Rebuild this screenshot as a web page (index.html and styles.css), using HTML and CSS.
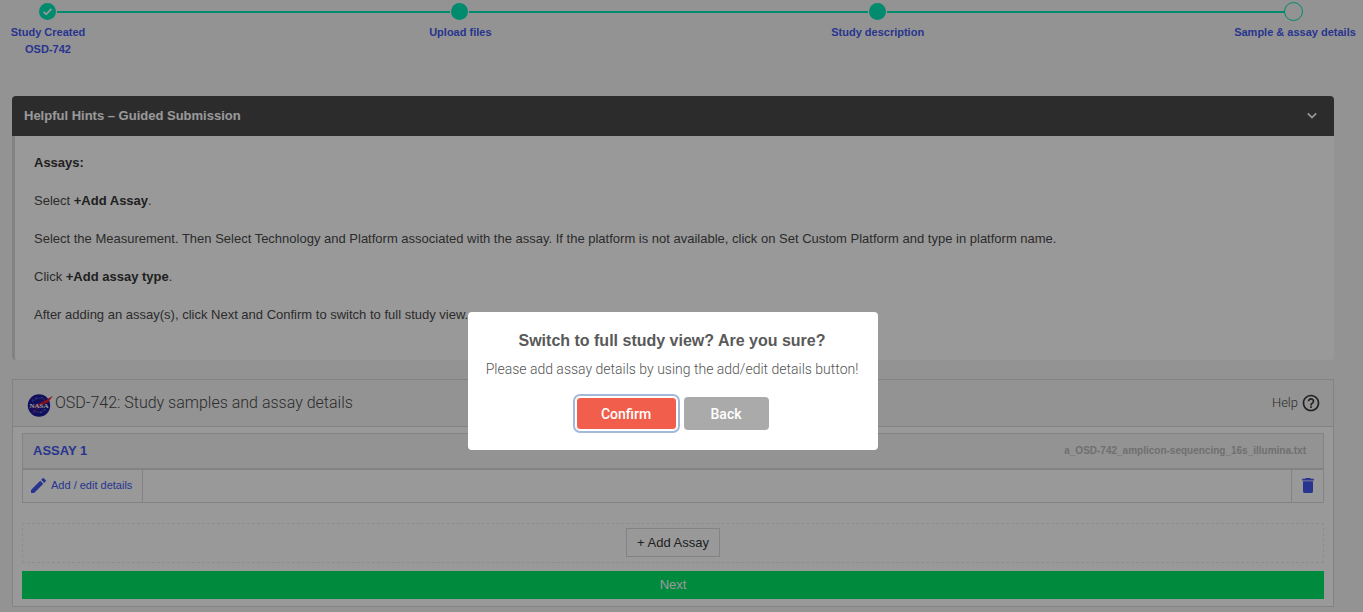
FILE: index.html
```html
<!DOCTYPE html>
<html lang="en">
<head>
<meta charset="utf-8">
<title>OSD-742: Study samples and assay details</title>
<link rel="stylesheet" href="styles.css">
</head>
<body>
<ol class="steps">
  <li class="step">
    <div class="track">
      <span class="marker"><svg viewBox="0 0 17 17" width="17" height="17"><path d="M4.600 8.800l2.600 2.500 5.200-5.400" fill="none" stroke="#fff" stroke-width="1.800"/></svg></span>
      <span class="line"></span>
    </div>
    <p class="step-label">Study Created<br>OSD-742</p>
  </li>
  <li class="step">
    <div class="track"><span class="marker"></span><span class="line"></span></div>
    <p class="step-label">Upload files</p>
  </li>
  <li class="step">
    <div class="track"><span class="marker"></span><span class="line"></span></div>
    <p class="step-label">Study description</p>
  </li>
  <li class="step">
    <div class="track"><span class="marker open"></span></div>
    <p class="step-label">Sample &amp; assay details</p>
  </li>
</ol>

<main class="content">
  <section class="hints">
    <header class="hints-head">
      <h2>Helpful Hints – Guided Submission</h2>
      <button class="icon-button" type="button" aria-label="Collapse hints">
        <svg viewBox="0 0 10 10" width="10" height="10"><path d="M.8 2.300L5 6.500l4.200-4.200" fill="none" stroke="currentColor" stroke-width="1.700"/></svg>
      </button>
    </header>
    <div class="hints-body">
      <p><strong>Assays:</strong></p>
      <p>Select <strong>+Add Assay</strong>.</p>
      <p>Select the Measurement. Then Select Technology and Platform associated with the assay. If the platform is not available, click on Set Custom Platform and type in platform name.</p>
      <p>Click <strong>+Add assay type</strong>.</p>
      <p>After adding an assay(s), click Next and Confirm to switch to full study view.</p>
    </div>
  </section>

  <section class="study">
    <header class="study-head">
      <svg class="logo" viewBox="0 0 26 24" width="26" height="24" aria-label="NASA">
        <circle cx="12" cy="12.500" r="11.200" fill="#1c1c9c"/>
        <g fill="#c9cbe8"><circle cx="9" cy="5" r=".5"/><circle cx="15" cy="4.500" r=".4"/><circle cx="7" cy="19" r=".4"/><circle cx="14" cy="19.500" r=".6"/><circle cx="18" cy="17" r=".5"/><circle cx="5.500" cy="7" r=".4"/></g>
        <path d="M5 9Q12 2 18 7M6 17q6 5 12-1" fill="none" stroke="#7478cc" stroke-width=".5"/>
        <path d="M.6 15.800L7 13l11-5.500L26 2.800 21 9.200l-5 2.400L4 20.700l11-10.200L7 14z" fill="#e0192c"/>
        <text x="12" y="15" text-anchor="middle" class="logo-text">NASA</text>
      </svg>
      <h1>OSD-742: Study samples and assay details</h1>
      <a class="help" href="#help">Help
        <svg viewBox="0 0 24 24" width="20" height="20"><path fill="#383838" d="M11 18h2v-2h-2v2zm1-16C6.480 2 2 6.480 2 12s4.480 10 10 10 10-4.480 10-10S17.520 2 12 2zm0 18c-4.410 0-8-3.590-8-8s3.590-8 8-8 8 3.590 8 8-3.590 8-8 8zm0-14c-2.210 0-4 1.790-4 4h2c0-1.100.9-2 2-2s2 .9 2 2c0 2-3 1.750-3 5h2c0-2.250 3-2.500 3-5 0-2.210-1.790-4-4-4z"/></svg>
      </a>
    </header>
    <div class="study-body">
      <article class="assay">
        <header class="assay-head">
          <h3>ASSAY 1</h3>
          <span class="file">a_OSD-742_amplicon-sequencing_16s_illumina.txt</span>
        </header>
        <div class="assay-actions">
          <button class="edit" type="button">
            <svg viewBox="3 3 18 18" width="15" height="15"><path fill="currentColor" d="M3 17.250V21h3.750L17.810 9.940l-3.750-3.750L3 17.250zM20.710 7.040c.39-.39.39-1.020 0-1.410l-2.340-2.340c-.39-.39-1.020-.39-1.410 0l-1.830 1.830 3.750 3.750 1.830-1.830z"/></svg>
            Add / edit details
          </button>
          <button class="remove" type="button" aria-label="Delete assay">
            <svg viewBox="5 3 14 18" width="12" height="15"><path fill="currentColor" d="M6 19c0 1.100.9 2 2 2h8c1.100 0 2-.9 2-2V7H6v12zM19 4h-3.500l-1-1h-5l-1 1H5v2h14V4z"/></svg>
          </button>
        </div>
      </article>
      <div class="add-zone"><button class="add" type="button">+ Add Assay</button></div>
      <button class="next" type="button">Next</button>
    </div>
  </section>
</main>

<div class="backdrop">
  <div class="dialog" role="dialog" aria-modal="true" aria-labelledby="dialog-title">
    <h2 id="dialog-title">Switch to full study view? Are you sure?</h2>
    <p>Please add assay details by using the add/edit details button!</p>
    <div class="dialog-actions">
      <button class="confirm" type="button">Confirm</button>
      <button class="back" type="button">Back</button>
    </div>
  </div>
</div>
</body>
</html>
```
FILE: styles.css
```css
* { box-sizing: border-box; }
body, h1, h2, h3, p, ol { margin: 0; padding: 0; }
body {
  background: #f5f5f5;
  color: #4a4a4a;
  font: 13px/20px "Liberation Sans", Arial, sans-serif;
  overflow: hidden;
}
button { font: inherit; cursor: pointer; border: 0; background: none; padding: 0; }
svg { display: block; flex: none; }

.steps {
  display: grid;
  grid-template-columns: 412fr 417fr 417fr 20px;
  list-style: none;
  height: 96px;
  padding: 1px 59px 0 37px;
}
.track { display: flex; align-items: center; height: 21px; }
.marker {
  flex: none;
  width: 17px;
  height: 17px;
  margin: 0 1px 0 2px;
  border-radius: 50%;
  background: #00e6b8;
}
.marker.open { width: 19px; height: 19px; margin: 0; background: none; border: 1px solid #00e6b8; }
.line { flex: 1; height: 2px; margin-right: -1px; background: #00e6b8; }
.step-label {
  width: 160px;
  margin: 2px 0 0 -69px;
  text-align: center;
  font-size: 11px;
  line-height: 17px;
  font-weight: bold;
  color: #4459ee;
}

.content { padding: 0 29px 0 12px; }
.hints { margin-bottom: 19px; }
.hints-head {
  display: flex;
  align-items: center;
  justify-content: space-between;
  height: 40px;
  padding: 0 17px 0 12px;
  border-radius: 4px 4px 0 0;
  background: #4a4a4a;
  color: #fff;
}
.hints-head h2 { font-size: 13px; }
.icon-button { color: inherit; }
.hints-body {
  display: grid;
  gap: 18px;
  padding: 17px 19px 35px;
  border-left: 3px solid #dbdbdb;
  border-radius: 0 0 4px 4px;
  background: #fff;
}
.hints-body strong { color: #363636; }

.study { border: 1px solid #dbdbdb; background: #fff; }
.study-head {
  display: flex;
  align-items: center;
  gap: 2px;
  height: 47px;
  padding: 0 12px 0 14px;
  border-bottom: 1px solid #dbdbdb;
  background: #f5f5f5;
}
.study-head h1 { font: 300 16px/20px Roboto, "Liberation Sans", sans-serif; }
.logo { margin-top: 4px; }
.logo-text { font: bold 7px "Liberation Serif", serif; fill: #fff; }
.help {
  display: flex;
  align-items: center;
  gap: 3px;
  margin-left: auto;
  color: inherit;
  text-decoration: none;
  font: 300 13px/20px Roboto, "Liberation Sans", sans-serif;
}
.study-body { padding: 6px 9px 7px; }
.assay { border: 1px solid #dbdbdb; }
.assay-head {
  display: flex;
  align-items: center;
  justify-content: space-between;
  height: 36px;
  padding: 0 17px 0 10px;
  border-bottom: 2px solid #dbdbdb;
  background: #f5f5f5;
}
.assay-head h3 { font-size: 13px; color: #4459ee; }
.file { font-size: 10px; font-weight: bold; color: #bababa; }
.assay-actions { display: flex; justify-content: space-between; height: 32px; }
.edit, .remove { display: flex; align-items: center; padding-bottom: 2px; color: #4459ee; }
.edit { gap: 5px; padding-left: 8px; padding-right: 10px; border-right: 1px solid #dbdbdb; font-size: 11px; }
.remove { padding-left: 10px; padding-right: 9px; border-left: 1px solid #dbdbdb; }
.add-zone {
  display: flex;
  justify-content: center;
  margin: 20px 0 8px;
  padding: 4px 0 5px;
  border: 1px dashed #ececec;
}
.add { height: 29px; padding: 0 10px; border: 1px solid #dbdbdb; color: #363636; }
.next { display: block; width: 100%; height: 28px; background: #00e668; color: #fff; }

.backdrop {
  position: fixed;
  inset: 0;
  display: flex;
  align-items: flex-start;
  justify-content: center;
  padding: 312px 17px 0 0;
  background: rgba(0, 0, 0, .4);
}
.dialog { width: 410px; padding: 19px 14px 20px 12px; border-radius: 4px; background: #fff; text-align: center; }
.dialog h2 { font-size: 16px; line-height: 20px; color: #595959; }
.dialog p { margin-top: 8px; font: 300 14px/20px Roboto, "Liberation Sans", sans-serif; color: #545454; }
.dialog-actions { display: flex; justify-content: center; gap: 7px; margin-top: 18px; }
.dialog-actions button { height: 33px; border-radius: 4px; color: #fff; font: 500 14px/20px Roboto, sans-serif; }
.dialog-actions .confirm {
  width: 101px;
  border: 1px solid #fff;
  background: #f15e4b;
  box-shadow: 0 0 0 1px #fff, 0 0 0 3px #a4b9d9;
}
.dialog-actions .back { width: 85px; background: #aaa; }
```
